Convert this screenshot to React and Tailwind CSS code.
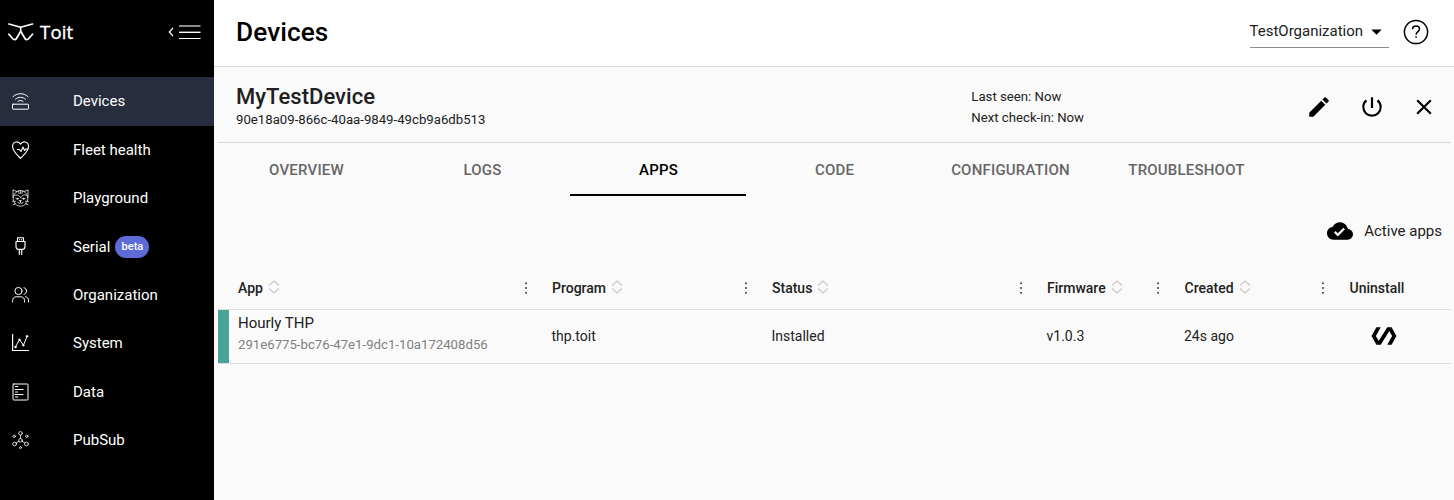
import React from "react";
import {
  MdEdit,
  MdPowerSettingsNew,
  MdClose,
  MdCloudDone,
  MdArrowDropDown,
  MdPolymer,
} from "react-icons/md";

function Icon({ children }) {
  return (
    <svg
      width="18"
      height="18"
      viewBox="0 0 18 18"
      fill="none"
      stroke="#fff"
      strokeWidth="1"
      strokeLinecap="round"
      strokeLinejoin="round"
      className="shrink-0"
    >
      {children}
    </svg>
  );
}

const DevicesIcon = () => (
  <Icon>
    <rect x="0.5" y="12.2" width="16" height="5" rx="0.6" />
    <path d="M1 4.700C5 .6 12 .6 16 4.700M3.500 7.200c2.800-2.600 7.200-2.600 10 0M6 9.400c1.500-1.300 3.500-1.300 5 0" />
  </Icon>
);
const HealthIcon = () => (
  <Icon>
    <path d="M8.500 17.300C4.700 13.500.600 10.300.600 5.500.600.700 6.200-.700 8.500 3.200 10.800-.700 16.500.700 16.500 5.500c0 4.800-4.200 8-8 11.800z" strokeWidth="1.100" />
    <path d="M5.200 8.500h2.300L9 10.500l2-4.500 1.500 3.500 1.500-1.500h2" strokeWidth="1.100" />
  </Icon>
);
const CatIcon = () => (
  <Icon>
    <g strokeWidth="0.75">
      <path d="M1 8.500V.900l4 1.700C7.200 1.200 9.800 1.200 12 2.600L16 .900v7.600M5 2.600C2.500 4 1.200 6.500 1.200 9.500c0 4.500 3.300 7.700 7.300 7.700s7.300-3.200 7.300-7.700c0-3-1.300-5.500-3.800-6.900" />
      <path d="M8.500 1.700v2.800M6.500 2l.6 2.500M10.500 2l-.6 2.500M2 6.800C4 5 7 6 8.500 8.700 10 6 13 5 15 6.800M3.800 9.300c.4 1.500 3 1.500 3.300 0M9.900 9.300c.3 1.500 2.900 1.500 3.300 0M.600 12.300h3M13.400 12.300h3M1 15.800l2.500-1.200M16 15.800l-2.500-1.200M7.500 11.500h2l-1 1zM8.500 12.500v1.200M5.700 13.300c.6 1.200 2.200 1.200 2.800.4.600.8 2.200.8 2.800-.4" />
      <path d="M5.300 9.300v.2M11.700 9.300v.2" strokeWidth="1.300" />
    </g>
  </Icon>
);
const SerialIcon = () => (
  <Icon>
    <path d="M5.500 4.500V.700h6v3.800M4 4.500h9v5c0 1.700-1 2.800-2.500 2.800h-4C5 12.300 4 11.200 4 9.500zM7.300 12.500v5M9.700 12.500v5M7.500 2.500v.3M9.500 2.500v.3" strokeWidth="1.150" />
  </Icon>
);
const OrgIcon = () => (
  <Icon>
    <circle cx="6.500" cy="5" r="3.600" />
    <path d="M.600 16v-1.500c0-2.200 1.500-3.700 3.700-3.700h4.500c2.200 0 3.700 1.500 3.700 3.700V16M12 1.700c3.500.8 3.500 5.800 0 6.600M13.500 10.700c2 .3 3 1.800 3 3.800V16" />
  </Icon>
);
const SystemIcon = () => (
  <Icon>
    <path d="M.600.500v16h16" strokeWidth="1.200" />
    <path d="M3.500 13l4-7.500 4 5.700 3.500-9" />
    <g fill="#fff" strokeWidth="0.400">
      <circle cx="3.500" cy="13" r="1" />
      <circle cx="7.500" cy="5.700" r=".9" />
      <circle cx="11.300" cy="11.300" r=".9" />
      <circle cx="15" cy="2.300" r="1" />
    </g>
  </Icon>
);
const DataIcon = () => (
  <Icon>
    <rect x="1" y="1" width="15" height="16" rx="0.800" />
    <path d="M3.500 3.500h2.300M3 6.500h8M3.500 9h2M3 11.500h8M3.500 14h2.300" strokeWidth="1.100" />
  </Icon>
);
const PubSubIcon = () => (
  <Icon>
    <g strokeWidth="0.800">
      <circle cx="8.500" cy="2.300" r="1.800" />
      <circle cx="8.500" cy="9.300" r="1.800" />
      <circle cx="2.600" cy="13" r="1.900" />
      <circle cx="14.400" cy="13" r="1.900" />
      <circle cx="2.200" cy="5.300" r="1.200" />
      <circle cx="14.800" cy="5.300" r="1.200" />
      <circle cx="8.500" cy="16.600" r="1" />
      <path d="M8.500 4.200v3.200M6.900 10.300l-2.600 1.600M10.100 10.300l2.600 1.600" />
    </g>
  </Icon>
);

const NAV = [
  { label: "Devices", icon: DevicesIcon, active: true },
  { label: "Fleet health", icon: HealthIcon },
  { label: "Playground", icon: CatIcon },
  { label: "Serial", icon: SerialIcon, badge: "beta" },
  { label: "Organization", icon: OrgIcon },
  { label: "System", icon: SystemIcon },
  { label: "Data", icon: DataIcon },
  { label: "PubSub", icon: PubSubIcon },
];

function Sidebar() {
  return (
    <aside className="flex w-[214px] shrink-0 flex-col bg-black text-white">
      <div className="flex h-[77px] items-start justify-between pl-2 pr-[13px] pt-[21px]">
        <div className="flex items-start">
          <svg width="26" height="22" viewBox="0 0 26 22" fill="none" stroke="#fff" strokeWidth="1.700" strokeLinecap="round" strokeLinejoin="round">
            <path d="M.9 3L12.700 6.200 24.500 3M12.700 6.200v4L8.300 17.700c-.7 1.200-2.600 1.200-3.500.1L.9 13.200M12.700 10.200l4.400 7.500c.7 1.200 2.600 1.200 3.500.1l3.900-4.600" />
          </svg>
          <span className="ml-1.5 font-['Open_Sans',sans-serif] text-[18.500px] font-medium leading-[22px] tracking-[0.2px] [-webkit-text-stroke:0.4px_white]">Toit</span>
        </div>
        <svg width="34" height="22" viewBox="0 0 34 22" fill="none" stroke="#fff">
          <path d="M6 7L2.300 11 6 15" strokeWidth="1.200" />
          <path d="M12 5h21.500" strokeWidth="2" opacity=".55" />
          <path d="M12 11.300h21.500" strokeWidth="1.400" />
          <path d="M12 17.500h21.500" strokeWidth="1" />
        </svg>
      </div>
      <nav className="flex flex-col">
        {NAV.map(({ label, icon: Glyph, active, badge }) => (
          <div key={label} className={active ? "flex h-[48.600px] items-center bg-[#282d3d] pl-3" : "flex h-[48.370px] items-center pl-3"}>
            <Glyph />
            <span className={badge ? "ml-[43px] pt-px text-[15px] leading-5" : "ml-[43px] text-[15px] leading-5"}>{label}</span>
            {badge && (
              <span className="ml-[5px] mt-px flex h-[22px] w-[34px] items-center justify-center rounded-full bg-[#5c6bd8] text-[11px] font-medium">
                {badge}
              </span>
            )}
          </div>
        ))}
      </nav>
    </aside>
  );
}

function SortIcon() {
  return (
    <svg width="12" height="14" viewBox="0 0 12 14" fill="none" stroke="#c9c9c9" strokeWidth="1.200" className="mb-[3px] ml-[5px]">
      <path d="M1 5.500L6 1l5 4.500M1 8.500L6 13l5-4.500" />
    </svg>
  );
}

function HelpIcon() {
  return (
    <svg width="26" height="26" viewBox="0 0 26 26" fill="none" stroke="#000" className="ml-[14px] mt-[19px]">
      <circle cx="13" cy="13" r="11.600" strokeWidth="1.500" />
      <path d="M9.600 10.200c0-4.300 6.900-4.300 6.900-.2 0 2.700-3.400 2.700-3.400 5.800" strokeWidth="1.500" />
      <path d="M12.300 18h1.600" strokeWidth="1.600" />
    </svg>
  );
}

const COLUMNS = [
  { label: "App", sort: true },
  { label: "Program", sort: true },
  { label: "Status", sort: true },
  { label: "Firmware", sort: true },
  { label: "Created", sort: true },
  { label: "Uninstall" },
];

const GRID = "grid grid-cols-[324px_220px_275px_137.5px_165px_1fr]";

function AppsTable() {
  return (
    <div className="mr-[3px] text-[14px] text-[#212121]">
      <div className={GRID + " h-[43px] border-b border-[#dedede]"}>
        {COLUMNS.map((c, i) => (
          <div key={c.label} className={i === 0 ? "flex items-center pl-5 pr-[14.500px]" : "flex items-center pl-[10px] pr-[14.500px]"}>
            <span className="font-medium">{c.label}</span>
            {c.sort && <SortIcon />}
            {c.sort && (
              <svg width="4" height="14" viewBox="0 0 4 14" className="ml-auto" fill="#212121">
                <rect x="1.200" y="1.500" width="1.600" height="1.600" />
                <rect x="1.200" y="6.200" width="1.600" height="1.600" />
                <rect x="1.200" y="11" width="1.600" height="1.600" />
              </svg>
            )}
          </div>
        ))}
      </div>
      <div className={GRID + " h-[54px] border-b border-[#dedede]"}>
        <div className="flex">
          <div className="w-[11px] bg-[#4aa396]" />
          <div className="flex flex-col pl-[9px] pt-[3px]">
            <span className="text-[15px] leading-5">Hourly THP</span>
            <span className="mt-[3px] text-[13.200px] leading-[18px] text-[#808080]">291e6775-bc76-47e1-9dc1-10a172408d56</span>
          </div>
        </div>
        <div className="flex items-center pl-[9.500px]">thp.toit</div>
        <div className="flex items-center pl-[9.500px]">Installed</div>
        <div className="flex items-center pl-[9.500px]">v1.0.3</div>
        <div className="flex items-center pl-[9.500px]">24s ago</div>
        <div className="flex items-center pb-px pl-[31px]">
          <MdPolymer size={26} color="#000" />
        </div>
      </div>
    </div>
  );
}

const TABS = ["OVERVIEW", "LOGS", "APPS", "CODE", "CONFIGURATION", "TROUBLESHOOT"];

export default function App() {
  return (
    <div className="flex h-[500px] w-[1454px] overflow-hidden bg-[#fafafa] font-[Roboto,sans-serif] text-[#212121]">
      <Sidebar />
      <main className="flex min-w-0 flex-1 flex-col">
        <header className="flex h-[67px] items-start border-b border-[#d9d9d9] bg-white pl-[22px] pr-[25.500px]">
          <h1 className="pt-[15px] text-[26.250px] font-medium leading-[34px] tracking-[0.05px] text-black">Devices</h1>
          <div className="ml-auto mt-[19px] flex h-[29px] w-[139px] items-start justify-between border-b border-[#8c8c8c]">
            <span className="text-[15px] leading-6">TestOrganization</span>
            <MdArrowDropDown size={25} color="#000" />
          </div>
          <HelpIcon />
        </header>
        <div className="ml-1 mr-[3px] flex h-[76px] items-start border-b border-[#d9d9d9] pl-[18px]">
          <div className="flex w-[735.300px] flex-col pt-[15px]">
            <span className="text-[22px] font-medium leading-[30px] tracking-[0.03px]">MyTestDevice</span>
            <span className="text-[13.200px] leading-4">90e18a09-866c-40aa-9849-49cb9a6db513</span>
          </div>
          <div className="flex flex-col pt-[19px] text-[13.200px] leading-[21px]">
            <span>Last seen: Now</span>
            <span>Next check-in: Now</span>
          </div>
          <div className="ml-auto flex gap-[26.500px] pr-[14px] pt-[27px] text-black">
            <MdEdit size={26} />
            <MdPowerSettingsNew size={26} />
            <MdClose size={26} />
          </div>
        </div>
        <div className="ml-1 flex h-[53px]">
          {TABS.map((t) => (
            <div
              key={t}
              className={
                t === "APPS"
                  ? "flex w-[176px] items-center justify-center border-b-2 border-black pl-px pt-[3px] text-[15px] font-medium tracking-[0.2px] text-black"
                  : "flex w-[176px] items-center justify-center border-b-2 border-transparent pl-px pt-[3px] text-[15px] font-medium tracking-[0.2px] text-[#666]"
              }
            >
              {t}
            </div>
          ))}
        </div>
        <div className="flex h-[71px] items-center justify-end pr-[12px]">
          <MdCloudDone size={26} color="#000" className="mb-px" />
          <span className="ml-[11px] text-[15px]">Active apps</span>
        </div>
        <div className="ml-1">
          <AppsTable />
        </div>
      </main>
    </div>
  );
}
